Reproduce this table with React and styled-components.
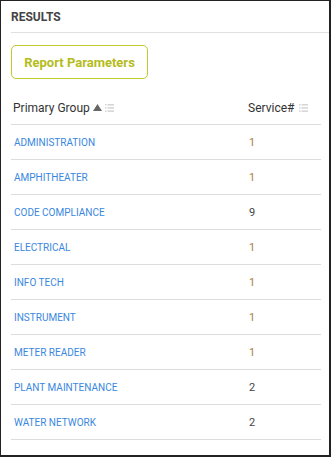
import React from 'react'
import styled, { createGlobalStyle } from 'styled-components'

const rows = [
    { name: 'ADMINISTRATION', count: 1 },
    { name: 'AMPHITHEATER', count: 1 },
    { name: 'CODE COMPLIANCE', count: 9 },
    { name: 'ELECTRICAL', count: 1 },
    { name: 'INFO TECH', count: 1 },
    { name: 'INSTRUMENT', count: 1 },
    { name: 'METER READER', count: 1 },
    { name: 'PLANT MAINTENANCE', count: 2 },
    { name: 'WATER NETWORK', count: 2 },
]

function ListIcon() {
    return (
        <svg width="9" height="8" viewBox="0 0 9 8">
            <g fill="#d4d4d4">
                <rect x="0" y="0" width="1.5" height="1.5" />
                <rect x="2.5" y="0" width="6.5" height="1.5" />
                <rect x="0" y="3.2" width="1.5" height="1.5" />
                <rect x="2.5" y="3.2" width="6.5" height="1.5" />
                <rect x="0" y="6.4" width="1.5" height="1.5" />
                <rect x="2.5" y="6.4" width="6.5" height="1.5" />
            </g>
        </svg>
    )
}

function SortUp() {
    return (
        <svg width="9" height="7" viewBox="0 0 9 7">
            <path d="M4.5 0 L9 7 L0 7 Z" fill="#666" />
        </svg>
    )
}

function App() {
    return (
        <>
            <GlobalStyle />
            <Panel>
                <Title>RESULTS</Title>
                <Body>
                    <ParamsButton>Report Parameters</ParamsButton>
                    <Table>
                        <HeadRow>
                            <HeadCell>
                                <span>Primary Group</span>
                                <SortUp />
                                <ListIcon />
                            </HeadCell>
                            <HeadCell $gap={5}>
                                <span>Service#</span>
                                <ListIcon />
                            </HeadCell>
                        </HeadRow>
                        {rows.map(r => (
                            <Row key={r.name}>
                                <NameCell>{r.name}</NameCell>
                                <CountCell $single={r.count === 1}>{r.count}</CountCell>
                            </Row>
                        ))}
                    </Table>
                </Body>
            </Panel>
        </>
    )
}

export default App

const GlobalStyle = createGlobalStyle`
    body {
        margin: 0;
        font-family: Roboto, "Liberation Sans", sans-serif;
        background: #fff;
    }
`

const Panel = styled.div`
    width: 331px;
    height: 457px;
    box-sizing: border-box;
    border: 1px solid #222;
    border-right-width: 2px;
    border-bottom-width: 2px;
    background: #fff;
    overflow: hidden;
`

const Title = styled.div`
    margin-left: 10px;
    height: 30px;
    padding-top: 1px;
    line-height: 30px;
    font-size: 12px;
    font-weight: 700;
    color: #444;
    border-bottom: 1px solid #e0e0e0;
`

const Body = styled.div`
    padding: 12px 8px 0 10px;
`

const ParamsButton = styled.button`
    display: block;
    width: 137px;
    height: 34px;
    padding: 0;
    border: 1.5px solid #c3ca2a;
    border-radius: 5px;
    background: #fff;
    font-family: Roboto, "Liberation Sans", sans-serif;
    font-size: 13px;
    font-weight: 700;
    color: #b4bc1c;
    cursor: pointer;
`

const Table = styled.div`
    margin-top: 12px;
`

const Row = styled.div`
    display: grid;
    grid-template-columns: 235px 1fr;
    height: 35px;
    align-items: center;
    border-bottom: 1px solid #dcdcdc;
    box-sizing: border-box;
`

const HeadRow = styled(Row)`
    height: 34px;
`

const HeadCell = styled.div`
    display: flex;
    align-items: center;
    gap: ${p => p.$gap || 3}px;
    padding-left: 2px;
    font-size: 12px;
    color: #333;
`

const NameCell = styled.div`
    padding-left: 3px;
    font-size: 10px;
    color: #3a87e0;
`

const CountCell = styled.div`
    padding-left: 3px;
    font-size: 11px;
    color: ${p => (p.$single ? '#a8813f' : '#444')};
`
